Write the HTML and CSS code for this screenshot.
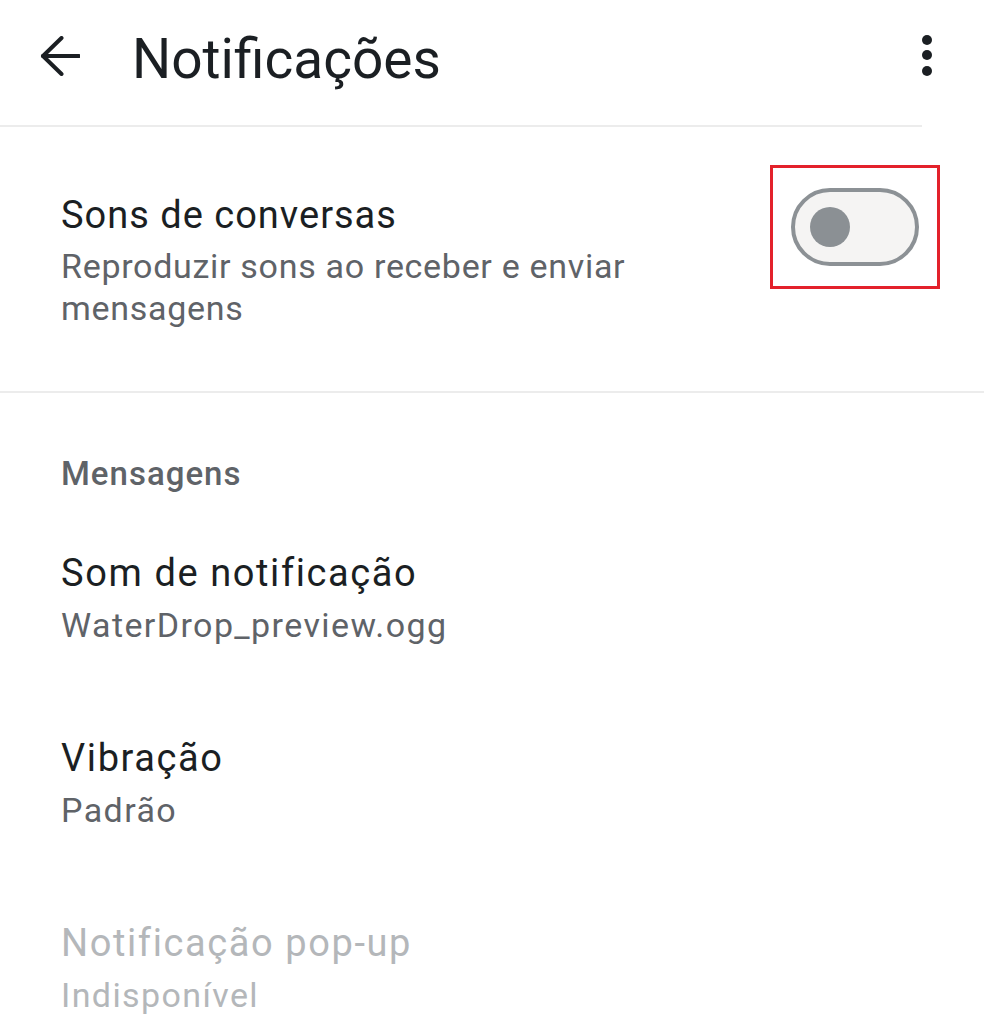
FILE: index.html
```html
<!DOCTYPE html>
<html lang="pt">
<head>
<meta charset="utf-8">
<title>Notificações</title>
<link rel="stylesheet" href="styles.css">
</head>
<body>
<div class="screen">
  <header class="appbar">
    <svg class="back" width="40" height="40" viewBox="0 0 40 40" aria-hidden="true">
      <path d="M39 20H3" fill="none" stroke="#1b1f23" stroke-width="4" stroke-linecap="round"/>
      <path d="M21.5 2L3 20L21.5 38" fill="none" stroke="#1b1f23" stroke-width="4" stroke-linecap="round" stroke-linejoin="round"/>
    </svg>
    <h1 class="title">Notificações</h1>
    <svg class="more" width="12" height="44" viewBox="0 0 12 44" aria-hidden="true">
      <circle cx="6" cy="6" r="5" fill="#1b1f23"/>
      <circle cx="6" cy="21" r="5" fill="#1b1f23"/>
      <circle cx="6" cy="37" r="5" fill="#1b1f23"/>
    </svg>
  </header>
  <div class="divider short"></div>

  <div class="switch-row">
    <div class="text first">
      <div class="item-title">Sons de conversas</div>
      <div class="item-sub">Reproduzir sons ao receber e enviar<br>mensagens</div>
    </div>
    <div class="highlight">
      <div class="track"><div class="thumb"></div></div>
    </div>
  </div>
  <div class="divider"></div>

  <div class="section-label">Mensagens</div>

  <div class="item">
    <div class="item-title">Som de notificação</div>
    <div class="item-sub">WaterDrop_preview.ogg</div>
  </div>
  <div class="item">
    <div class="item-title">Vibração</div>
    <div class="item-sub">Padrão</div>
  </div>
  <div class="item disabled">
    <div class="item-title">Notificação pop-up</div>
    <div class="item-sub">Indisponível</div>
  </div>
</div>
</body>
</html>
```

FILE: styles.css
```css
html, body {
  margin: 0;
  padding: 0;
  background: #ffffff;
}

body {
  font-family: Roboto, "Noto Sans", "Liberation Sans", sans-serif;
  color: #1b1f23;
  overflow: hidden;
}

.screen {
  width: 984px;
  height: 1033px;
  overflow: hidden;
}

.appbar {
  display: flex;
  align-items: center;
  padding: 27px 51px 34px 40px;
  height: 64px;
}

.back {
  flex: none;
  margin-top: -6px;
}

.title {
  margin: 0 0 0 52px;
  font-size: 55px;
  font-weight: 400;
  line-height: 64px;
  letter-spacing: 0;
  flex: 1;
}

.more {
  flex: none;
  margin-top: -6px;
}

.divider {
  height: 2px;
  background: #ececec;
}

.divider.short {
  width: 922px;
}

.switch-row {
  display: flex;
  align-items: flex-start;
  justify-content: space-between;
  padding: 38px 44px 0 61px;
}

.text.first {
  padding-top: 28px;
  padding-bottom: 62px;
}

.item-title {
  font-size: 38px;
  line-height: 44px;
  letter-spacing: 1.6px;
  color: #1b1f23;
}

.item-sub {
  margin-top: 9px;
  font-size: 34px;
  line-height: 42px;
  letter-spacing: 1.4px;
  color: #5f6368;
}

.first .item-title {
  letter-spacing: 1px;
}

.first .item-sub {
  margin-top: 8px;
  letter-spacing: 0.7px;
}

.highlight {
  box-sizing: border-box;
  width: 170px;
  height: 124px;
  border: 3px solid #e3212b;
  display: flex;
  align-items: center;
  justify-content: center;
}

.track {
  box-sizing: border-box;
  width: 128px;
  height: 78px;
  border: 4px solid #8c9195;
  border-radius: 39px;
  background: #f5f4f3;
  display: flex;
  align-items: center;
  padding-left: 15px;
}

.thumb {
  width: 40px;
  height: 40px;
  border-radius: 50%;
  background: #8b9094;
}

.section-label {
  padding: 61px 61px 12px;
  font-size: 33px;
  line-height: 40px;
  font-weight: 500;
  letter-spacing: 1px;
  color: #5f6368;
}

.item {
  padding: 45px 61px;
}

.item.disabled .item-title,
.item.disabled .item-sub {
  color: #b4b7ba;
}
```
